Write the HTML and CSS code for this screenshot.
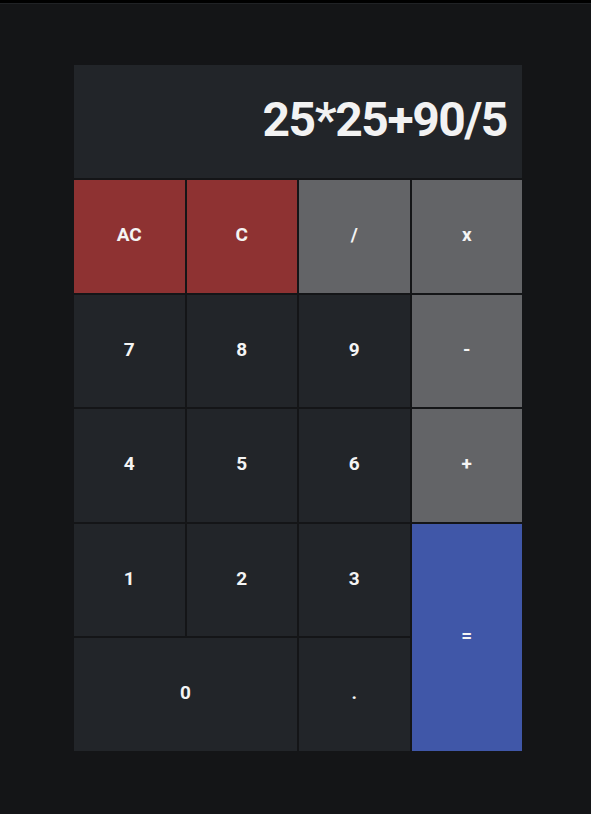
FILE: index.html
```html
<!DOCTYPE html>
<html>
<head>
<meta charset="utf-8">
<link rel="stylesheet" href="styles.css">
</head>
<body>
<div class="topbar"></div>
<main class="page">
  <div class="calc">
    <div class="display">25*25+90/5</div>
    <button class="key red">AC</button>
    <button class="key red">C</button>
    <button class="key grey">/</button>
    <button class="key grey">x</button>
    <button class="key">7</button>
    <button class="key">8</button>
    <button class="key">9</button>
    <button class="key grey">-</button>
    <button class="key">4</button>
    <button class="key">5</button>
    <button class="key">6</button>
    <button class="key grey">+</button>
    <button class="key">1</button>
    <button class="key">2</button>
    <button class="key">3</button>
    <button class="key blue equals">=</button>
    <button class="key zero">0</button>
    <button class="key">.</button>
  </div>
</main>
</body>
</html>
```
FILE: styles.css
```css
html, body {
  margin: 0;
  padding: 0;
  background: #141517;
  height: 100%;
}
.topbar {
  height: 3px;
  background: #000;
  border-bottom: 1px solid #202225;
}
.page {
  padding: 61px 0 0 74px;
}
.calc {
  width: 448px;
  display: grid;
  grid-template-columns: repeat(4, 1fr);
  grid-template-rows: 113px repeat(5, 112.5px);
  gap: 2px;
  background: #141517;
  font-family: "Roboto", sans-serif;
}
.display {
  grid-column: 1 / 5;
  background: #222529;
  color: #f2f2f2;
  font-size: 48px;
  font-weight: bold;
  letter-spacing: -1.4px;
  display: flex;
  align-items: center;
  justify-content: flex-end;
  padding-right: 15px;
  padding-bottom: 4px;
}
.key {
  border: 0;
  margin: 0;
  padding: 0 0 3px 0;
  background: #222529;
  color: #f4f4f4;
  font-family: inherit;
  font-size: 19px;
  font-weight: bold;
}
.red { background: #8e3232; }
.grey { background: #636467; }
.blue { background: #4057a8; }
.equals { grid-row: span 2; }
.zero { grid-column: span 2; }
```
